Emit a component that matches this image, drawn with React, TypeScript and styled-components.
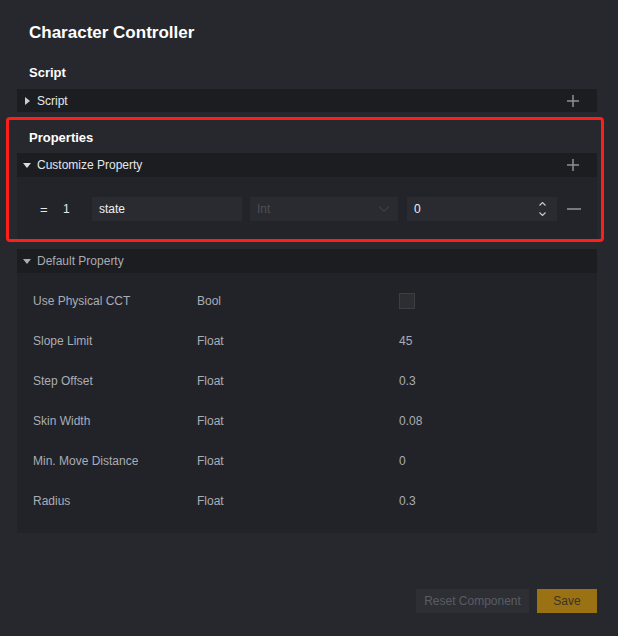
import React from "react"
import styled, { createGlobalStyle } from "styled-components"

const GlobalStyle = createGlobalStyle`
  html, body {
    margin: 0;
    padding: 0;
    background: #27282d;
  }
  body {
    font-family: "Liberation Sans", Arial, sans-serif;
  }
`

type Row = {
    label: string
    type: string
    value?: string
    checkbox?: boolean
}

const defaultRows: Row[] = [
    { label: "Use Physical CCT", type: "Bool", checkbox: true },
    { label: "Slope Limit", type: "Float", value: "45" },
    { label: "Step Offset", type: "Float", value: "0.3" },
    { label: "Skin Width", type: "Float", value: "0.08" },
    { label: "Min. Move Distance", type: "Float", value: "0" },
    { label: "Radius", type: "Float", value: "0.3" },
]

const Page = styled.div`
  width: 618px;
  height: 636px;
  box-sizing: border-box;
  padding: 0 21px 23px 17px;
  display: flex;
  flex-direction: column;
  background: #27282d;
  overflow: hidden;
`

const Title = styled.h1`
  margin: 0;
  padding: 23px 0 0 12px;
  height: 42px;
  box-sizing: border-box;
  font-size: 17px;
  line-height: 20px;
  font-weight: bold;
  color: #ffffff;
`

const SectionTitle = styled.h2<{ $top: number }>`
  margin: 0;
  padding: ${(p) => p.$top}px 0 0 12px;
  height: ${(p) => p.$top + 16}px;
  box-sizing: border-box;
  font-size: 13px;
  line-height: 16px;
  font-weight: bold;
  color: #ffffff;
`

const Highlight = styled.section`
  margin: 5px -7px 0 -11px;
  padding: 0 4px 0 8px;
  border: 3px solid #ff1f1a;
  border-radius: 4px;
`

const Header = styled.div<{ $h?: number; $top?: number }>`
  height: ${(p) => p.$h ?? 24}px;
  margin-top: ${(p) => p.$top ?? 0}px;
  display: flex;
  align-items: center;
  background: #1c1d21;
`

const Caret = styled.span<{ $open: boolean; $dim?: boolean }>`
  width: 0;
  height: 0;
  ${(p) =>
        p.$open
            ? `margin: 1px 6px 0 6px;
       border-left: 4px solid transparent;
       border-right: 4px solid transparent;
       border-top: 5px solid ${p.$dim ? "#a8acb4" : "#d8dbe0"};`
            : `margin: 0 7px 0 8px;
       border-top: 4px solid transparent;
       border-bottom: 4px solid transparent;
       border-left: 5px solid #c8ccd4;`}
`

const HeaderText = styled.span<{ $dim?: boolean }>`
  font-size: 12px;
  color: ${(p) => (p.$dim ? "#a8acb4" : "#e4e7ec")};
  flex: 1;
`

const IconButton = styled.button`
  width: 24px;
  height: 24px;
  margin-right: 12px;
  padding: 0;
  border: none;
  background: none;
  display: flex;
  align-items: center;
  justify-content: center;
  cursor: pointer;
`

const CustomBody = styled.div`
  height: 62px;
  box-sizing: border-box;
  padding: 2px 0 0 23px;
  background: #232429;
  display: flex;
  align-items: center;
`

const Handle = styled.span`
  width: 23px;
  font-size: 13px;
  color: #e4e7ec;
`

const Index = styled.span`
  width: 29px;
  font-size: 12px;
  color: #e4e7ec;
`

const Field = styled.div<{ $w: number; $gap: number }>`
  width: ${(p) => p.$w}px;
  height: 24px;
  margin-right: ${(p) => p.$gap}px;
  background: #2a2b30;
  display: flex;
  align-items: center;
  padding: 0 8px 0 7px;
  box-sizing: border-box;
`

const FieldText = styled.span<{ $muted?: boolean }>`
  flex: 1;
  font-size: 12px;
  color: ${(p) => (p.$muted ? "#4d4f55" : "#eef0f3")};
`

const Spinner = styled.div`
  display: flex;
  flex-direction: column;
  gap: 6px;
  margin-right: 3px;
`

const DefaultSection = styled.section`
  margin-top: 7px;
`

const DefaultBody = styled.div`
  background: #222328;
  padding: 8px 0 12px 16px;
`

const PropRow = styled.div`
  height: 40px;
  display: grid;
  grid-template-columns: 164px 202px 1fr;
  align-items: center;
  font-size: 12px;
  color: #a9adb6;
`

const Checkbox = styled.span`
  width: 16px;
  height: 16px;
  box-sizing: border-box;
  background: #2d2e32;
  border: 1px solid #3d3e43;
  display: block;
`

const Footer = styled.div`
  margin-top: auto;
  display: flex;
  justify-content: flex-end;
  gap: 8px;
`

const Button = styled.button<{ $primary?: boolean }>`
  height: 24px;
  padding: 0;
  width: ${(p) => (p.$primary ? 60 : 113)}px;
  border: none;
  font-family: "Liberation Sans", Arial, sans-serif;
  font-size: 12px;
  background: ${(p) => (p.$primary ? "#9a7213" : "#2d2f35")};
  color: ${(p) => (p.$primary ? "#3c3423" : "#5a5d65")};
  cursor: pointer;
`

const Plus = () => (
    <svg width="14" height="14" viewBox="0 0 14 14">
        <path d="M7 1v12M1 7h12" stroke="#8e9096" strokeWidth="1.5" />
    </svg>
)

const Minus = () => (
    <svg width="14" height="14" viewBox="0 0 14 14">
        <path d="M0 7h14" stroke="#8e9096" strokeWidth="1.6" />
    </svg>
)

const Chevron = () => (
    <svg width="12" height="8" viewBox="0 0 12 8">
        <path d="M1 1.5l5 5 5-5" fill="none" stroke="#4a4c52" strokeWidth="1" />
    </svg>
)

const Arrow = ({ up }: { up: boolean }) => (
    <svg width="7" height="4" viewBox="0 0 7 4">
        <path d={up ? "M0.5 3.5l3-3 3 3" : "M0.5 0.5l3 3 3-3"} fill="none" stroke="#c8ccd4" strokeWidth="1.1" />
    </svg>
)

const App = () => {
    return (
        <>
            <GlobalStyle />
            <Page>
                <Title>Character Controller</Title>

                <SectionTitle $top={23}>Script</SectionTitle>
                <Header $h={23} $top={8}>
                    <Caret $open={false} />
                    <HeaderText>Script</HeaderText>
                    <IconButton><Plus /></IconButton>
                </Header>

                <Highlight>
                    <SectionTitle $top={10}>Properties</SectionTitle>
                    <Header $top={7}>
                        <Caret $open={true} />
                        <HeaderText>Customize Property</HeaderText>
                        <IconButton><Plus /></IconButton>
                    </Header>
                    <CustomBody>
                        <Handle>=</Handle>
                        <Index>1</Index>
                        <Field $w={150} $gap={8}>
                            <FieldText>state</FieldText>
                        </Field>
                        <Field $w={148} $gap={9}>
                            <FieldText $muted>Int</FieldText>
                            <Chevron />
                        </Field>
                        <Field $w={150} $gap={10}>
                            <FieldText>0</FieldText>
                            <Spinner>
                                <Arrow up={true} />
                                <Arrow up={false} />
                            </Spinner>
                        </Field>
                        <Minus />
                    </CustomBody>
                </Highlight>

                <DefaultSection>
                    <Header>
                        <Caret $open={true} $dim />
                        <HeaderText $dim>Default Property</HeaderText>
                    </Header>
                    <DefaultBody>
                        {defaultRows.map((row) => (
                            <PropRow key={row.label}>
                                <span>{row.label}</span>
                                <span>{row.type}</span>
                                {row.checkbox ? <Checkbox /> : <span>{row.value}</span>}
                            </PropRow>
                        ))}
                    </DefaultBody>
                </DefaultSection>

                <Footer>
                    <Button>Reset Component</Button>
                    <Button $primary>Save</Button>
                </Footer>
            </Page>
        </>
    )
}

export default App
